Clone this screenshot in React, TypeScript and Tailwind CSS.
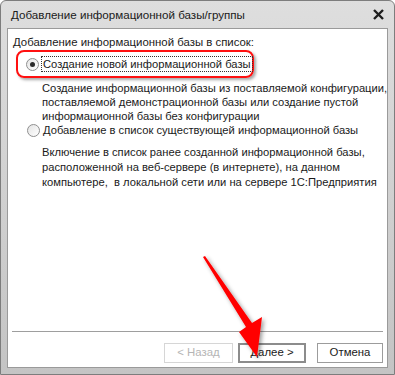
import React from "react";

const font = { fontFamily: '"Liberation Sans", Arial, sans-serif' };

function Radio({ checked }: { checked?: boolean }) {
  return (
    <div className="w-[13px] h-[13px] rounded-full border border-[#8f8f8f] bg-gradient-to-br from-[#e4e4e4] to-white flex items-center justify-center shrink-0">
      {checked && <div className="w-[5px] h-[5px] rounded-full bg-[#2b2b2b]" />}
    </div>
  );
}

function WizardButton({
  label,
  disabled,
  primary,
  width,
}: {
  label: string;
  disabled?: boolean;
  primary?: boolean;
  width: string;
}) {
  return (
    <div
      className={
        width +
        " h-[20px] flex items-center justify-center text-[11.4px] bg-white " +
        (disabled
          ? "border border-[#d6d6d6] text-[#b5b5b5]"
          : primary
          ? "border-2 border-[#8c8c8c] text-[#1a1a1a]"
          : "border border-[#9c9c9c] text-[#1a1a1a]")
      }
    >
      {label}
    </div>
  );
}

function Arrow() {
  return (
    <svg
      className="absolute left-0 top-0 pointer-events-none"
      width={395}
      height={375}
      viewBox="0 0 395 375"
    >
      <defs>
        <filter id="sh" x="-30%" y="-20%" width="160%" height="140%">
          <feDropShadow dx="2" dy="2" stdDeviation="2" floodColor="#000" floodOpacity="0.4" />
        </filter>
      </defs>
      <polygon
        points="203,257 246,327 239,332 257,357 262,317 252,323 205,256"
        fill="#ff0000"
        filter="url(#sh)"
      />
    </svg>
  );
}

export default function App() {
  return (
    <div className="w-[395px] h-[375px] bg-white relative overflow-hidden text-[#1a1a1a]" style={font}>
      <div className="w-full h-full rounded-t-[6px] border border-[#7d7d7d] bg-gradient-to-b from-[#dedede] to-[#c4c4c4] flex flex-col px-[6px] pb-[6px]">
        {/* title bar */}
        <div className="h-[27px] flex items-center justify-between pl-[4px] pr-[4px] shrink-0">
          <span className="text-[11.6px] text-[#202020] whitespace-nowrap">Добавление информационной базы/группы</span>
          <svg width="11" height="11" viewBox="0 0 11 11">
            <path d="M1 1 L10 10 M10 1 L1 10" stroke="#1e1e1e" strokeWidth="2.4" />
          </svg>
        </div>
        {/* body */}
        <div className="flex-1 bg-white border border-[#9a9a9a] flex flex-col">
          <div className="flex-1 pt-[6px] pl-[5px] pr-[2px] text-[11.2px] whitespace-nowrap">
            <div className="leading-[15px] text-[11.4px]">Добавление информационной базы в список:</div>

            <div className="ml-[3px] w-[238px] h-[28px] rounded-[8px] border-2 border-[#ff1010] shadow-[2px_2px_3px_rgba(0,0,0,0.35)] flex items-center pl-[8px] gap-[2px]">
              <Radio checked />
              <span className="leading-[14px] border border-dotted border-[#333] px-[1px]">
                Создание новой информационной базы
              </span>
            </div>

            <div className="ml-[29px] mt-[3px] leading-[14px]">
              <div>Создание информационной базы из поставляемой конфигурации,</div>
              <div>поставляемой демонстрационной базы или создание пустой</div>
              <div>информационной базы без конфигурации</div>
            </div>

            <div className="h-[14px] ml-[14px] flex items-center gap-[2px]">
              <Radio />
              <span className="leading-[14px] pl-[1px]">Добавление в список существующей информационной базы</span>
            </div>

            <div className="ml-[29px] mt-[8px] leading-[15px]">
              <div>Включение в список ранее созданной информационной базы,</div>
              <div>расположенной на веб-сервере (в интернете), на данном</div>
              <div>компьютере,&nbsp; в локальной сети или на сервере 1С:Предприятия</div>
            </div>
          </div>

          <div className="mx-[4px] border-t border-[#9e9e9e]" />
          <div className="flex items-start justify-end pt-[11px] pb-[4px] pr-[4px]">
            <WizardButton label="< Назад" disabled width="w-[69px]" />
            <div className="w-[5px]" />
            <WizardButton label="Далее >" primary width="w-[68px]" />
            <div className="w-[11px]" />
            <WizardButton label="Отмена" width="w-[66px]" />
          </div>
        </div>
      </div>
      <Arrow />
    </div>
  );
}
